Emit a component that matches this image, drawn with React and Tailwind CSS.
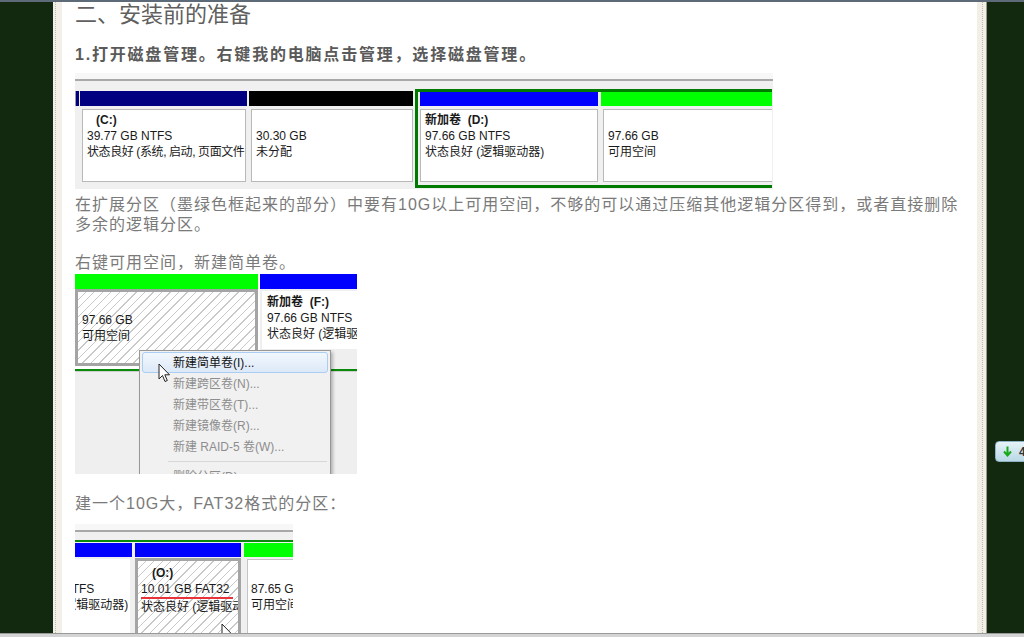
import React from "react";

const CJK = { fontFamily: '"Liberation Sans", "Noto Sans CJK SC", sans-serif' };

const hatch =
  "bg-[repeating-linear-gradient(135deg,#ffffff_0px,#ffffff_5px,#c9c9c9_5px,#c9c9c9_6px)]";

const Cursor = () => (
  <svg width="13" height="20" viewBox="0 0 13 20">
    <path
      d="M1 1 L1 16 L4.5 12.5 L7 18.5 L9.3 17.5 L6.8 11.8 L11.5 11.8 Z"
      fill="#ffffff"
      stroke="#222"
      strokeWidth="1"
      strokeLinejoin="round"
    />
  </svg>
);

const Box = ({ children, className = "" }) => (
  <div className={`overflow-hidden border border-[#b9b9b9] bg-white pl-[4px] pt-[2px] text-[12px] leading-[16px] text-[#1a1a1a] whitespace-nowrap ${className}`}>
    {children}
  </div>
);

const DiskOne = () => (
  <div className="flex h-[116px] w-[698px] flex-col overflow-hidden bg-[#f0f0f0]">
    <div className="h-[6px] bg-[#f7f7f7]" />
    <div className="h-[2px] bg-[#a8a8a8]" />
    <div className="h-[8px]" />
    <div className="flex h-[100px]">
      <div className="w-[4px] shrink-0 pt-[2px]">
        <div className="h-[15px] border-l border-[#9a9a9a] bg-[#000080]" />
      </div>
      <div className="w-[169px] shrink-0 pt-[2px] pl-[1px]">
        <div className="mr-[1px] h-[15px] bg-[#000080]" />
        <Box className="mx-[2px] mt-[3px] h-[73px] pl-[3px]">
          <div className="pl-[9px] font-bold">(C:)</div>
          <div>39.77 GB NTFS</div>
          <div className="tracking-[-0.4px]">状态良好 (系统, 启动, 页面文件</div>
        </Box>
      </div>
      <div className="w-[167px] shrink-0 pt-[2px] pl-[1px]">
        <div className="mr-[2px] h-[15px] bg-black" />
        <Box className="mx-[2px] mt-[3px] h-[73px]">
          <div>&nbsp;</div>
          <div>30.30 GB</div>
          <div>未分配</div>
        </Box>
      </div>
      <div className="flex h-[99px] w-[357px] shrink-0 border-[3px] border-r-0 border-[#007a00]">
        <div className="w-[182px] shrink-0 pl-[2px]">
          <div className="mr-[2px] h-[14px] bg-[#0000ff]" />
          <Box className="mr-[2px] mt-[3px] h-[73px]">
            <div className="font-bold">新加卷&nbsp;&nbsp;(D:)</div>
            <div>97.66 GB NTFS</div>
            <div>状态良好 (逻辑驱动器)</div>
          </Box>
        </div>
        <div className="min-w-0 flex-1 pl-[1px]">
          <div className="h-[14px] bg-[#00ff00]" />
          <Box className="ml-[2px] mt-[3px] h-[73px] border-r-0">
            <div>&nbsp;</div>
            <div>97.66 GB</div>
            <div>可用空间</div>
          </Box>
        </div>
      </div>
    </div>
  </div>
);

const MenuItem = ({ children, active, disabled }) => (
  <div
    className={`mx-[2px] flex h-[21px] items-center rounded-[3px] text-[12px] whitespace-nowrap ${
      active
        ? "border border-[#a9cdf3] bg-[linear-gradient(#f2f7fd,#dde9f8)] pl-[30px] text-[#111]"
        : disabled
        ? "pl-[31px] text-[#8d8d8d]"
        : "pl-[31px] text-[#111]"
    }`}
  >
    {children}
  </div>
);

const DiskTwo = () => (
  <div className="relative flex h-[200px] w-[282px] flex-col overflow-hidden bg-[#efefef]">
    <div className="flex h-[95px] bg-white">
      <div className="flex w-[183px] shrink-0 flex-col">
        <div className="h-[15px] bg-[#00ff00]" />
        <div className={`h-[77px] border-[3px] border-[#a4a4a4] ${hatch} pl-[4px] pt-[20px] text-[12px] leading-[16px] text-[#1a1a1a]`}>
          <div>97.66 GB</div>
          <div>可用空间</div>
        </div>
      </div>
      <div className="ml-[2px] flex min-w-0 flex-1 flex-col bg-[#efefef]">
        <div className="h-[15px] bg-[#0000ff]" />
        <div className="ml-[2px] mt-[2px] h-[58px] overflow-hidden bg-white pl-[5px] pt-[3px] text-[12px] leading-[16px] text-[#1a1a1a] whitespace-nowrap">
          <div className="font-bold">新加卷&nbsp;&nbsp;(F:)</div>
          <div>97.66 GB NTFS</div>
          <div>状态良好 (逻辑驱动器)</div>
        </div>
      </div>
    </div>
    <div className="h-[2px] bg-[#0a8a0a]" />
    <div className="h-[1px] bg-[#cfcfcf]" />

    <div className="absolute left-[64px] top-[76px] w-[192px] border border-[#979797] bg-[#f1f1f1] pt-[1px] shadow-[2px_2px_3px_rgba(0,0,0,0.25)]">
      <MenuItem active>新建简单卷(I)...</MenuItem>
      <MenuItem disabled>新建跨区卷(N)...</MenuItem>
      <MenuItem disabled>新建带区卷(T)...</MenuItem>
      <MenuItem disabled>新建镜像卷(R)...</MenuItem>
      <MenuItem disabled>新建 RAID-5 卷(W)...</MenuItem>
      <div className="my-[4px] ml-[28px] mr-[3px] h-[1px] bg-[#d7d7d7]" />
      <MenuItem disabled>删除分区(D)</MenuItem>
    </div>
    <div className="absolute left-[83px] top-[89px]">
      <Cursor />
    </div>
  </div>
);

const DiskThree = () => (
  <div className="relative flex h-[110px] w-[218px] flex-col overflow-hidden bg-[#f0f0f0]">
    <div className="h-[6px] bg-[#f7f7f7]" />
    <div className="h-[2px] bg-[#a8a8a8]" />
    <div className="h-[8px]" />
    <div className="h-[2px] bg-[#0a8a0a]" />
    <div className="flex flex-1 pt-[1px]">
      <div className="flex w-[57px] shrink-0 flex-col">
        <div className="h-[14px] bg-[#0000ff]" />
        <div className="mr-[2px] mt-[2px] flex-1 overflow-hidden bg-white pt-[22px] text-[12px] leading-[16px] text-[#1a1a1a] whitespace-nowrap">
          <div className="-ml-[66px]">97.66 GB NTFS</div>
          <div className="-ml-[66px]">状态良好 (逻辑驱动器)</div>
        </div>
      </div>
      <div className="ml-[3px] flex w-[106px] shrink-0 flex-col">
        <div className="h-[14px] bg-[#0000ff]" />
        <div className={`mt-[1px] flex-1 overflow-hidden border-[3px] border-b-0 border-[#a4a4a4] ${hatch} pl-[3px] pt-[4px] text-[12px] leading-[16px] text-[#1a1a1a] whitespace-nowrap`}>
          <div className="pl-[11px] font-bold">(O:)</div>
          <div className="w-fit border-b-2 border-[#e8333a] pr-[3px]">10.01 GB FAT32</div>
          <div>状态良好 (逻辑驱动器)</div>
        </div>
      </div>
      <div className="ml-[3px] flex min-w-0 flex-1 flex-col">
        <div className="h-[14px] bg-[#00ff00]" />
        <div className="ml-[3px] mt-[2px] flex-1 overflow-hidden border border-r-0 border-[#c4c4c4] bg-white pl-[3px] pt-[21px] text-[12px] leading-[16px] text-[#1a1a1a] whitespace-nowrap">
          <div>87.65 GB</div>
          <div>可用空间</div>
        </div>
      </div>
    </div>
    <div className="absolute left-[146px] top-[99px]">
      <Cursor />
    </div>
  </div>
);

export default function App() {
  return (
    <div className="flex h-[637px] w-[1024px] flex-col overflow-hidden bg-[#12290f]" style={CJK}>
      <div className="h-[2px] shrink-0 bg-[#5d6b78]" />
      <div className="flex min-h-0 flex-1 overflow-hidden">
        <div className="w-[53px] shrink-0 bg-[#12290f]" />
        <div className="w-[9px] shrink-0 bg-[#f1efe6] pl-[2px]">
          <div className="h-full w-[1px] border-l border-dotted border-[#bdbbae]" />
        </div>
        <div className="w-[915px] shrink-0 bg-white pl-[13px] text-[#7a7a7a]">
          <div className="-mt-[1px] text-[22px] leading-[28px] tracking-[0px] text-[#606060]">二、安装前的准备</div>
          <div className="mt-[16px] text-[16px] font-bold leading-[20px] tracking-[1.8px] text-[#5a5a5a]">
            1.打开磁盘管理。右键我的电脑点击管理，选择磁盘管理。
          </div>
          <div className="mt-[8px]">
            <DiskOne />
          </div>
          <p className="mt-[6px] w-[895px] text-[16px] leading-[20px] tracking-[1px]">
            在扩展分区（墨绿色框起来的部分）中要有10G以上可用空间，不够的可以通过压缩其他逻辑分区得到，或者直接删除多余的逻辑分区。
          </p>
          <p className="mt-[18px] text-[16px] leading-[20px] tracking-[1px]">右键可用空间，新建简单卷。</p>
          <div className="mt-[1px]">
            <DiskTwo />
          </div>
          <p className="mt-[20px] text-[16px] leading-[20px] tracking-[1px]">建一个10G大，FAT32格式的分区：</p>
          <div className="mt-[10px]">
            <DiskThree />
          </div>
        </div>
        <div className="flex w-[10px] shrink-0 bg-[#f1efe6] pl-[5px]">
          <div className="h-full w-[1px] border-l border-dotted border-[#bdbbae]" />
          <div className="ml-[3px] h-full w-[1px] bg-[#9c9a8e]" />
        </div>
        <div className="min-w-0 flex-1 overflow-hidden bg-[#12290f] pl-[8px] pt-[439px]">
          <div className="flex h-[21px] w-[40px] items-center rounded-l-[4px] border border-[#8fb3c4] bg-[linear-gradient(#e6f3f8,#b9d8e6)] pl-[7px] text-[12px] font-bold text-[#333]">
            <svg width="9" height="11" viewBox="0 0 9 11">
              <path d="M4.5 0.5 V9 M1 5.5 L4.5 9.5 L8 5.5" fill="none" stroke="#18a818" strokeWidth="2" />
            </svg>
            <span className="ml-[7px]">4</span>
          </div>
        </div>
      </div>
      <div className="h-[4px] shrink-0 border-t border-[#9a9a9a] bg-[#d4d4d4]" />
    </div>
  );
}
